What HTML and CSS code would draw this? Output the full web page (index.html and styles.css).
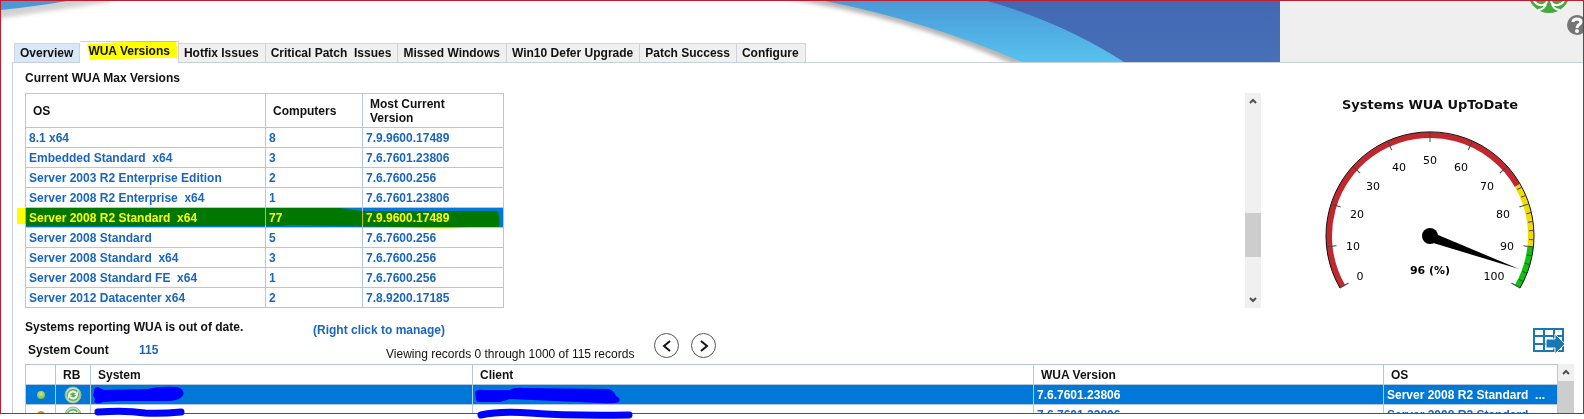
FILE: index.html
```html
<!DOCTYPE html>
<html lang="en">
<head>
  <meta charset="UTF-8">
  <meta name="viewport" content="width=device-width, initial-scale=1.0">
  <title>WUA Versions</title>
  <link rel="stylesheet" href="styles.css">
</head>
<body>
  <svg class="symbols" width="0" height="0" aria-hidden="true">
    <defs>
      <radialGradient id="ball" cx="50%" cy="35%" r="65%">
        <stop offset="0" stop-color="#c4e890"/>
        <stop offset="1" stop-color="#7fb84c"/>
      </radialGradient>
      <linearGradient id="disc" x1="0" y1="0" x2="0" y2="1">
        <stop offset="0" stop-color="#dbe9dc"/>
        <stop offset="0.5" stop-color="#9ccb92"/>
        <stop offset="1" stop-color="#c9e8b4"/>
      </linearGradient>
      <symbol id="reboot" viewBox="0 0 18 18">
        <circle cx="9" cy="9" r="8" fill="url(#disc)" stroke="#9db5a4"/>
        <circle cx="9" cy="9" r="6" fill="#62ab58"/>
        <path d="M5 9a4 4 0 0 1 7-2M13 9a4 4 0 0 1-7 2" fill="none" stroke="#eef8ea" stroke-width="2"/>
        <path d="M14 5v4h-4zM4 13V9h4z" fill="#eef8ea"/>
      </symbol>
    </defs>
  </svg>

  <div class="frame">
    <header class="banner">
      <svg class="swoosh" width="1279" height="61" viewBox="1 1 1279 61" aria-hidden="true">
        <defs>
          <linearGradient id="sky" x1="0" y1="0" x2="0" y2="1">
            <stop offset="0" stop-color="#4a98d6"/>
            <stop offset="1" stop-color="#56c2ee"/>
          </linearGradient>
          <linearGradient id="deep" x1="0" y1="0" x2="0" y2="1">
            <stop offset="0" stop-color="#4268b2"/>
            <stop offset="1" stop-color="#4770b9"/>
          </linearGradient>
          <filter id="soft" x="-10%" y="-30%" width="120%" height="160%">
            <feGaussianBlur stdDeviation="2"/>
          </filter>
        </defs>
        <rect width="1280" height="62" fill="#fff"/>
        <path d="M-5 15Q50 7 110-2H-5z" fill="#c8c8c8" stroke="#d2d2d2" stroke-width="8" filter="url(#soft)"/>
        <path d="M0 10Q40 6 73 0H0z" fill="#4a98d6"/>
        <path d="M780-2Q905 16 1013 64H1100V-2z" fill="#b5b5b5" filter="url(#soft)"/>
        <path d="M820 0Q924 20 1022 62H1280V0z" fill="url(#sky)"/>
        <path d="M984 0Q1062 22 1124 62H1280V0z" fill="url(#deep)"/>
      </svg>
      <nav class="tabs">
        <a class="tab hover" href="#">Overview</a>
        <a class="tab active" href="#">WUA Versions</a>
        <a class="tab" href="#">Hotfix Issues</a>
        <a class="tab" href="#">Critical Patch &nbsp;Issues</a>
        <a class="tab" href="#">Missed Windows</a>
        <a class="tab" href="#">Win10 Defer Upgrade</a>
        <a class="tab" href="#">Patch Success</a>
        <a class="tab" href="#">Configure</a>
      </nav>
      <svg class="brand" width="42" height="13" viewBox="0 29 42 13" aria-hidden="true">
        <circle cx="21" cy="20" r="21" fill="#46a940"/>
        <path d="M6 29c4 6 12 5 13 0M36 29c-4 6-12 5-13 0M18 31c0 4-4 7-8 7M24 31c0 4 4 7 8 7" fill="none" stroke="#fff" stroke-width="2"/>
      </svg>
      <a class="help" href="#" aria-label="Help">
        <svg width="20" height="20" viewBox="0 0 20 20">
          <circle cx="10" cy="10" r="10" fill="#757575"/>
          <path d="M6 7c0-4 8-4 8 0 0 3-4 2-4 6" fill="none" stroke="#fff" stroke-width="3"/>
          <circle cx="10" cy="16" r="2" fill="#fff"/>
        </svg>
      </a>
    </header>

    <main class="panel">
      <h1 class="title">Current WUA Max Versions</h1>
      <section class="summary">
        <div class="versions">
          <table class="grid versions-grid">
            <colgroup><col class="c-os"><col class="c-count"><col class="c-ver"></colgroup>
            <thead>
              <tr><th>OS</th><th>Computers</th><th>Most Current<br>Version</th></tr>
            </thead>
            <tbody>
              <tr><td>8.1 x64</td><td>8</td><td>7.9.9600.17489</td></tr>
              <tr><td>Embedded Standard &nbsp;x64</td><td>3</td><td>7.6.7601.23806</td></tr>
              <tr><td>Server 2003 R2 Enterprise Edition</td><td>2</td><td>7.6.7600.256</td></tr>
              <tr><td>Server 2008 R2 Enterprise &nbsp;x64</td><td>1</td><td>7.6.7601.23806</td></tr>
              <tr class="selected"><td>Server 2008 R2 Standard &nbsp;x64</td><td>77</td><td>7.9.9600.17489</td></tr>
              <tr><td>Server 2008 Standard</td><td>5</td><td>7.6.7600.256</td></tr>
              <tr><td>Server 2008 Standard &nbsp;x64</td><td>3</td><td>7.6.7600.256</td></tr>
              <tr><td>Server 2008 Standard FE &nbsp;x64</td><td>1</td><td>7.6.7600.256</td></tr>
              <tr><td>Server 2012 Datacenter x64</td><td>2</td><td>7.8.9200.17185</td></tr>
            </tbody>
          </table>
        </div>
        <div class="scrollbar">
          <svg width="8" height="6" viewBox="0 0 8 6"><path d="M1 5l3-3 3 3" fill="none" stroke="#505050" stroke-width="2"/></svg>
          <div class="thumb"></div>
          <svg width="8" height="6" viewBox="0 0 8 6"><path d="M1 1l3 3 3-3" fill="none" stroke="#505050" stroke-width="2"/></svg>
        </div>
        <div class="gauge">
          <h2 class="gauge-title">Systems WUA UpToDate</h2>
          <svg width="220" height="168" viewBox="-110 -108 220 168">
            <defs>
              <path id="tick" d="M0-104V-94" stroke="#444"/>
              <path id="minor" d="M0-104V-99" stroke="#444"/>
            </defs>
            <g fill="none" stroke-width="6">
              <path d="M-87.500 50.500A101 101 0 0 1 87.500-50.500" stroke="#c1272d"/>
              <path d="M87.500-50.500A101 101 0 0 1 100.400 10.600" stroke="#f2dc00"/>
              <path d="M100.400 10.600A101 101 0 0 1 87.500 50.500" stroke="#0cc20c"/>
              <path d="M-90 52A104 104 0 1 1 90 52" stroke="#111" stroke-width="1"/>
            </g>
            <g class="ticks">
              <use href="#tick" transform="rotate(-120)"/>
              <use href="#tick" transform="rotate(-96)"/>
              <use href="#tick" transform="rotate(-72)"/>
              <use href="#tick" transform="rotate(-48)"/>
              <use href="#tick" transform="rotate(-24)"/>
              <use href="#tick"/>
              <use href="#tick" transform="rotate(24)"/>
              <use href="#tick" transform="rotate(48)"/>
              <use href="#tick" transform="rotate(72)"/>
              <use href="#tick" transform="rotate(96)"/>
              <use href="#tick" transform="rotate(120)"/>
              <use href="#minor" transform="rotate(62)"/>
              <use href="#minor" transform="rotate(67)"/>
              <use href="#minor" transform="rotate(77)"/>
              <use href="#minor" transform="rotate(82)"/>
              <use href="#minor" transform="rotate(87)"/>
              <use href="#minor" transform="rotate(92)"/>
              <use href="#minor" transform="rotate(101)"/>
              <use href="#minor" transform="rotate(106)"/>
              <use href="#minor" transform="rotate(111)"/>
              <use href="#minor" transform="rotate(116)"/>
            </g>
            <g class="scale">
              <text x="-70" y="44">0</text>
              <text x="-77" y="14">10</text>
              <text x="-73" y="-18">20</text>
              <text x="-57" y="-46">30</text>
              <text x="-31" y="-65">40</text>
              <text x="0" y="-72">50</text>
              <text x="31" y="-65">60</text>
              <text x="57" y="-46">70</text>
              <text x="73" y="-18">80</text>
              <text x="77" y="14">90</text>
              <text x="64" y="44">100</text>
              <text class="reading" x="0" y="38">96 (%)</text>
            </g>
            <circle r="8"/>
            <path d="M1-4L89 33L0 6z"/>
          </svg>
        </div>
      </section>

      <section class="toolbar">
        <div class="count">
          <h2 class="title">Systems reporting WUA is out of date.</h2>
          <p><span class="label">System Count</span><a href="#">115</a></p>
        </div>
        <div class="paging">
          <a href="#">(Right click to manage)</a>
          <p>Viewing records 0 through 1000 of 115 records</p>
        </div>
        <button class="round" type="button" aria-label="Previous">
          <svg width="10" height="12" viewBox="0 0 10 12"><path d="M8 1L2 6l6 5" fill="none" stroke="#111" stroke-width="2"/></svg>
        </button>
        <button class="round" type="button" aria-label="Next">
          <svg width="10" height="12" viewBox="0 0 10 12"><path d="M2 1l6 5-6 5" fill="none" stroke="#111" stroke-width="2"/></svg>
        </button>
        <button class="export" type="button" aria-label="Export">
          <svg width="32" height="26" viewBox="0 0 32 26">
            <path d="M1 1h29v22H1zM1 8h29M1 16h29M11 1v22M21 1v22" fill="#fff" stroke="#1878b4" stroke-width="2"/>
            <path d="M13 11h9V6l10 10-10 10v-6h-9z" fill="#1878b4" stroke="#fff"/>
          </svg>
        </button>
      </section>

      <section class="systems">
        <table class="grid systems-grid">
          <colgroup><col class="c-dot"><col class="c-rb"><col class="c-sys"><col><col class="c-wua"><col class="c-sysos"></colgroup>
          <thead>
            <tr><th></th><th>RB</th><th>System</th><th>Client</th><th>WUA Version</th><th>OS</th></tr>
          </thead>
          <tbody>
            <tr class="selected">
              <td class="icon"><svg width="8" height="8" viewBox="0 0 8 8"><circle cx="4" cy="4" r="4" fill="url(#ball)"/></svg></td>
              <td class="icon"><svg width="18" height="18"><use href="#reboot"/></svg></td>
              <td></td><td></td><td>7.6.7601.23806</td><td>Server 2008 R2 Standard &nbsp;...</td>
            </tr>
            <tr>
              <td class="icon"><svg width="8" height="8" viewBox="0 0 8 8"><circle cx="4" cy="4" r="4" fill="#e08a3c"/></svg></td>
              <td class="icon"><svg width="18" height="18"><use href="#reboot"/></svg></td>
              <td></td><td></td><td>7.6.7601.23806</td><td>Server 2008 R2 Standard</td>
            </tr>
          </tbody>
        </table>
        <div class="scrollbar">
          <svg width="8" height="6" viewBox="0 0 8 6"><path d="M1 5l3-3 3 3" fill="none" stroke="#505050" stroke-width="2"/></svg>
          <div class="thumb long"></div>
        </div>
      </section>
    </main>
  </div>

  <!-- marker strokes drawn over the page -->
  <svg class="marker" width="640" height="419" viewBox="0 0 640 419" aria-hidden="true">
    <path d="M87 44L140 41L176 41Q178 50 177 58L150 58L90 60Z" fill="#ff0"/>
    <path d="M17 208H340L362 211H498Q500 220 499 227H470Q440 230 400 227L340 226L290 225L280 226H26V224H17Z" fill="#ff0"/>
  </svg>
  <svg class="pen" width="640" height="419" viewBox="0 0 640 419" aria-hidden="true">
    <g fill="#00f">
      <path d="M94 391Q94 387 98 387L104 390L148 389Q160 386 178 387Q185 390 183 395Q181 400 170 401L120 401L103 402Q98 405 94 402Q96 398 93 396Z"/>
      <path d="M475 392Q477 389 484 390L510 390Q514 387 524 388L608 389Q614 390 616 396Q621 398 619 402Q615 404 600 403L510 399L500 402L477 402Q475 398 475 392Z"/>
    </g>
    <g fill="none" stroke="#00f" stroke-width="7" stroke-linecap="round">
      <path d="M98 412Q125 410 145 413Q160 414 181 412"/>
      <path d="M481 415Q500 411 530 413Q570 416 629 415"/>
    </g>
  </svg>
</body>
</html>
```
FILE: styles.css
```css
* {
  margin: 0;
  padding: 0;
  box-sizing: border-box;
}
body {
  position: relative;
  height: 100vh;
  padding-bottom: 5px;
  overflow: hidden;
  background: #fff;
  font: bold 12px/14px "Liberation Sans", Arial, sans-serif;
  color: #111;
}
a {
  color: #1a66bd;
  text-decoration: none;
}
svg {
  display: block;
}
button {
  border: none;
  background: none;
}
.symbols {
  position: absolute;
}
.frame {
  display: flex;
  flex-direction: column;
  height: 100%;
  border: 1px solid #be1e2d;
  overflow: hidden;
}

/* banner and tabs */
.banner {
  position: relative;
  display: flex;
  align-items: flex-end;
  flex: none;
  height: 61px;
  padding-left: 13px;
  background: #efefef;
}
.swoosh {
  position: absolute;
  top: 0;
  left: 0;
}
.brand {
  position: absolute;
  top: 0;
  right: 13px;
}
.help {
  position: absolute;
  top: 14px;
  right: -4px;
}
.tabs {
  position: relative;
  display: flex;
  align-items: flex-end;
}
.tab {
  padding: 0 6px 0 5px;
  border: 1px solid #d0d4da;
  border-width: 1px 1px 0 0;
  line-height: 18px;
  background: #f0f0f0;
  color: #111;
}
.tab.hover {
  border-left-width: 1px;
  background: #d9e8f8;
}
.tab.active {
  margin-bottom: -1px;
  padding: 0 8px 3px;
  background: #fff;
}

.panel {
  flex: 1;
  min-height: 0;
  margin-left: 11px;
  padding-left: 12px;
  border: 1px solid #c9cfd8;
  border-width: 1px 0 0 1px;
  background: #fff;
}
.title {
  font-size: 12px;
  line-height: 30px;
}

/* tables */
.grid {
  border-collapse: collapse;
  table-layout: fixed;
}
.grid th,
.grid td {
  border: 1px solid #b4c8dc;
  text-align: left;
  white-space: nowrap;
}
.grid th {
  padding: 0 7px;
}
.grid td {
  height: 20px;
  padding: 0 3px;
  color: #1a66bd;
}
.grid .selected td {
  background: #0078d7;
  color: #fff;
}
.grid .icon svg {
  margin: 0 auto;
}
.versions-grid {
  width: 479px;
}
.versions-grid th {
  height: 34px;
}
.c-os {
  width: 240px;
}
.c-count {
  width: 97px;
}
.c-ver {
  width: 141px;
}

/* summary */
.summary {
  display: flex;
}
.versions {
  flex: 1;
}
.scrollbar {
  display: flex;
  flex-direction: column;
  align-items: center;
  justify-content: space-between;
  flex: none;
  width: 16px;
  padding: 5px 0;
  background: #f0f0f0;
}
.thumb {
  width: 100%;
  height: 44px;
  margin-top: 68px;
  background: #cdcdcd;
}
.thumb.long {
  flex: 1;
  margin-top: 6px;
}
.gauge {
  display: flex;
  flex-direction: column;
  align-items: center;
  flex: none;
  width: 322px;
  padding-left: 16px;
  font-family: "DejaVu Sans", Verdana, sans-serif;
}
.gauge-title {
  padding: 3px 0 14px;
  font-size: 13px;
  line-height: 18px;
}
.scale {
  font-size: 11px;
  font-weight: normal;
  text-anchor: middle;
}
.scale .reading {
  font-weight: bold;
}

/* toolbar */
.toolbar {
  display: flex;
  height: 56px;
  padding-right: 18px;
}
.count {
  width: 288px;
  padding-top: 9px;
}
.count .title {
  line-height: 20px;
}
.count p {
  display: flex;
  padding: 6px 3px;
}
.label {
  width: 111px;
}
.paging {
  width: 341px;
  padding-top: 15px;
}
.paging p {
  padding: 10px 0 0 73px;
  font-weight: normal;
}
.round {
  display: flex;
  align-items: center;
  justify-content: center;
  width: 25px;
  height: 25px;
  margin: 25px 12px 0 0;
  border: 1px solid #555;
  border-radius: 50%;
}
.export {
  margin: 20px 0 auto auto;
}

/* systems */
.systems {
  display: flex;
  padding-right: 9px;
}
.systems-grid {
  flex: 1;
}
.systems-grid th {
  height: 20px;
}
.c-dot {
  width: 30px;
}
.c-rb {
  width: 35px;
}
.c-sys {
  width: 382px;
}
.c-wua {
  width: 350px;
}
.c-sysos {
  width: 174px;
}

.marker,
.pen {
  position: absolute;
  top: 0;
  left: 0;
  pointer-events: none;
}
.marker {
  mix-blend-mode: multiply;
}
```
